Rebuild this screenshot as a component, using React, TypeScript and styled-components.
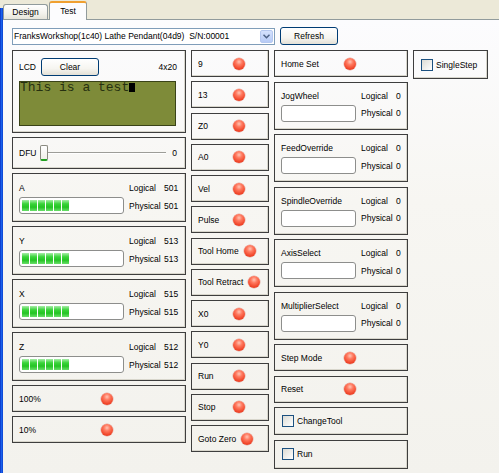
import React from "react";
import styled, { createGlobalStyle } from "styled-components";

const GlobalStyle = createGlobalStyle`
  html, body { margin: 0; padding: 0; width: 499px; height: 473px; overflow: hidden; background: #ece9d8; }
  body { font-family: "Liberation Sans", Arial, sans-serif; font-size: 8.5px; color: #000; }
  #root { height: 100%; }
  * { box-sizing: border-box; }
`;

const Shell = styled.div`
  display: flex;
  height: 473px;
  background: #ece9d8;
`;

const Edge = styled.div`
  width: 3px;
  margin-top: 8px;
  background: linear-gradient(to right, #0a2fc4, #1a62ea, #0b3fd0);
`;

const Main = styled.div`
  flex: 1;
  display: flex;
  flex-direction: column;
  min-width: 0;
`;

const TabStrip = styled.div`
  height: 19px;
  display: flex;
  align-items: flex-end;
  background: #ece9d8;
`;

const Tab = styled.div<{ $active?: boolean }>`
  display: flex;
  align-items: center;
  justify-content: center;
  width: ${(p) => (p.$active ? 38 : 45)}px;
  height: ${(p) => (p.$active ? 19 : 15)}px;
  margin-left: ${(p) => (p.$active ? 1 : 0)}px;
  margin-bottom: ${(p) => (p.$active ? -1 : 0)}px;
  border: 1px solid #919b9c;
  border-bottom: none;
  border-top: ${(p) => (p.$active ? "2px solid #f0a030" : "1px solid #919b9c")};
  border-radius: 3px 3px 0 0;
  background: ${(p) =>
    p.$active ? "#fcfcfe" : "linear-gradient(#ffffff, #f3f2ec 60%, #e6e4da)"};
  padding-bottom: ${(p) => (p.$active ? 2 : 0)}px;
  position: relative;
  z-index: ${(p) => (p.$active ? 1 : 0)};
`;

const Page = styled.div`
  flex: 1;
  border-top: 1px solid #919b9c;
  background: linear-gradient(#fcfcfe, #f7f6f2 40%, #f3f2ed);
  padding: 7px 0 0 9px;
`;

const TopRow = styled.div`
  display: flex;
  align-items: center;
  gap: 5px;
  margin-bottom: 5px;
`;

const Combo = styled.div`
  width: 263px;
  height: 17px;
  border: 1px solid #7f9db9;
  background: #fff;
  display: flex;
  align-items: center;
`;

const ComboText = styled.span`
  flex: 1;
  padding-left: 1px;
  white-space: pre;
`;

const DropBtn = styled.span`
  width: 13px;
  height: 13px;
  margin-right: 1px;
  border-radius: 2px;
  background: linear-gradient(#d4e1fd, #b7cbf6);
  border: 1px solid #b5c8f0;
  display: flex;
  align-items: center;
  justify-content: center;
`;

const Button = styled.button<{ $w: number }>`
  width: ${(p) => p.$w}px;
  height: 18px;
  padding: 0;
  border: 1px solid #003c74;
  border-radius: 3px;
  background: linear-gradient(#ffffff, #f6f5f0 60%, #e3e0d6);
  font: inherit;
  color: #000;
`;

const Columns = styled.div`
  display: flex;
  align-items: flex-start;
  gap: 5px;
`;

const Col = styled.div<{ $w: number; $gap: number }>`
  width: ${(p) => p.$w}px;
  display: flex;
  flex-direction: column;
  gap: ${(p) => p.$gap}px;
`;

const Box = styled.div<{ $h: number }>`
  height: ${(p) => p.$h}px;
  border: 1px solid #3e3e3e;
  box-shadow: inset -1px -1px 0 #d8d6cc;
`;

const LedBox = styled(Box)`
  display: flex;
  align-items: center;
  padding-left: 6px;
`;

const LedLabel = styled.span<{ $min: number }>`
  min-width: ${(p) => p.$min}px;
  white-space: nowrap;
`;

const Led = styled.span`
  width: 12px;
  height: 12px;
  margin-left: 5px;
  border-radius: 50%;
  background: radial-gradient(circle at 50% 32%, #ffc4b4 0%, #ff7a60 30%, #f04428 70%, #cc3220 100%);
  box-shadow: 0 0 0 0.5px rgba(200, 60, 40, 0.4);
  flex-shrink: 0;
`;

const LcdBox = styled(Box)`
  padding: 7px 8px 0 6px;
  display: flex;
  flex-direction: column;
  gap: 6px;
`;

const LcdHeader = styled.div`
  display: flex;
  align-items: center;
  gap: 5px;
  height: 17px;
`;

const Spacer = styled.span`
  flex: 1;
`;

const LcdScreen = styled.div`
  width: 157px;
  height: 45px;
  background: #7e8b39;
  border: 1px solid #3a4318;
  font-family: "Liberation Mono", "Courier New", monospace;
  font-size: 13px;
  line-height: 10px;
  color: #263010;
  padding: 1px 0 0 0;
  display: flex;
  align-items: flex-start;
`;

const Cursor = styled.span`
  display: inline-block;
  width: 6px;
  height: 9px;
  background: #000;
  margin-top: 0px;
`;

const DfuBox = styled(Box)`
  display: flex;
  align-items: center;
  padding: 0 8px 0 6px;
`;

const DfuLabel = styled.span`
  width: 21px;
`;

const Thumb = styled.span`
  width: 8px;
  height: 16px;
  border: 1px solid #8a8a80;
  border-bottom: 2px solid #21a121;
  border-radius: 2px;
  background: linear-gradient(#ffffff, #f0efe8);
  flex-shrink: 0;
`;

const Track = styled.span`
  flex: 1;
  height: 2px;
  margin: 0 6px 0 0;
  border-top: 1px solid #9d9d98;
  border-bottom: 1px solid #ffffff;
`;

const AnalogBox = styled(Box)<{ $field: number }>`
  display: grid;
  grid-template-columns: ${(p) => p.$field}px 30px auto;
  grid-template-rows: 12px 17px;
  column-gap: 5px;
  row-gap: 3px;
  padding: ${(p) => (p.$field > 90 ? 8 : 7)}px 0 0 6px;
  align-items: center;
  white-space: nowrap;
`;

const Bar = styled.div`
  height: 17px;
  border: 1px solid #8d8e8c;
  border-radius: 3px;
  background: #fff;
  padding: 2px 2px;
  display: flex;
  gap: 1px;
`;

const Block = styled.span`
  width: 7px;
  height: 11px;
  background: linear-gradient(#a8eda8, #3ad43a 35%, #24c424 65%, #6ade6a);
`;

const Field = styled.div`
  height: 17px;
  border: 1px solid #8d8e8c;
  border-radius: 3px;
  background: #fff;
`;

const CheckBox = styled(Box)`
  display: flex;
  align-items: center;
  gap: 3px;
  padding-left: 7px;
`;

const Check = styled.span`
  width: 12px;
  height: 12px;
  border: 1px solid #1c5180;
  background: linear-gradient(135deg, #dcdcd5, #ffffff);
`;

const Chevron = () => (
  <svg width="7" height="5" viewBox="0 0 7 5">
    <path d="M0.5 0.8 L3.5 3.8 L6.5 0.8" fill="none" stroke="#4d6185" strokeWidth="1.5" />
  </svg>
);

type LedItem = { label: string };

const middle: string[] = [
  "9", "13", "Z0", "A0", "Vel", "Pulse", "Tool Home", "Tool Retract",
  "X0", "Y0", "Run", "Stop", "Goto Zero",
];

const axes = [
  { name: "A", v: "501" },
  { name: "Y", v: "513" },
  { name: "X", v: "515" },
  { name: "Z", v: "512" },
];

const inputs = ["JogWheel", "FeedOverride", "SpindleOverride", "AxisSelect", "MultiplierSelect"];

const LedRow = ({ label, min, h = 27 }: { label: string; min: number; h?: number }) => (
  <LedBox $h={h}>
    <LedLabel $min={min}>{label}</LedLabel>
    <Led />
  </LedBox>
);

const Analog = ({
  name, logical, physical, field, h, children,
}: {
  name: string; logical: string; physical: string; field: number; h: number; children: React.ReactNode;
}) => (
  <AnalogBox $h={h} $field={field}>
    <span>{name}</span>
    <span>Logical</span>
    <span>{logical}</span>
    {children}
    <span>Physical</span>
    <span>{physical}</span>
  </AnalogBox>
);

export default function App() {
  return (
    <>
      <GlobalStyle />
      <Shell>
        <Edge />
        <Main>
          <TabStrip>
            <Tab>Design</Tab>
            <Tab $active>Test</Tab>
          </TabStrip>
          <Page>
            <TopRow>
              <Combo>
                <ComboText>FranksWorkshop(1c40) Lathe Pendant(04d9)  S/N:00001</ComboText>
                <DropBtn>
                  <Chevron />
                </DropBtn>
              </Combo>
              <Button $w={58}>Refresh</Button>
            </TopRow>
            <Columns>
              <Col $w={174} $gap={4}>
                <LcdBox $h={83}>
                  <LcdHeader>
                    <span>LCD</span>
                    <Button $w={58}>Clear</Button>
                    <Spacer />
                    <span>4x20</span>
                  </LcdHeader>
                  <LcdScreen>
                    <span>This is a test</span>
                    <Cursor />
                  </LcdScreen>
                </LcdBox>
                <DfuBox $h={32}>
                  <DfuLabel>DFU</DfuLabel>
                  <Thumb />
                  <Track />
                  <span>0</span>
                </DfuBox>
                {axes.map((a) => (
                  <Analog key={a.name} name={a.name} logical={a.v} physical={a.v} field={105} h={49}>
                    <Bar>
                      {Array.from({ length: 6 }).map((_, i) => (
                        <Block key={i} />
                      ))}
                    </Bar>
                  </Analog>
                ))}
                <LedRow label="100%" min={77} />
                <LedRow label="10%" min={77} />
              </Col>
              <Col $w={78} $gap={4.25}>
                {middle.map((m) => (
                  <LedRow key={m} label={m} min={30} />
                ))}
              </Col>
              <Col $w={134} $gap={4.5}>
                <LedRow label="Home Set" min={58} />
                {inputs.map((n) => (
                  <Analog key={n} name={n} logical="0" physical="0" field={75} h={48}>
                    <Field />
                  </Analog>
                ))}
                <LedRow label="Step Mode" min={58} />
                <LedRow label="Reset" min={58} />
                <CheckBox $h={28}>
                  <Check />
                  <span>ChangeTool</span>
                </CheckBox>
                <CheckBox $h={29}>
                  <Check />
                  <span>Run</span>
                </CheckBox>
              </Col>
              <Col $w={75} $gap={0}>
                <CheckBox $h={29}>
                  <Check />
                  <span>SingleStep</span>
                </CheckBox>
              </Col>
            </Columns>
          </Page>
        </Main>
      </Shell>
    </>
  );
}
